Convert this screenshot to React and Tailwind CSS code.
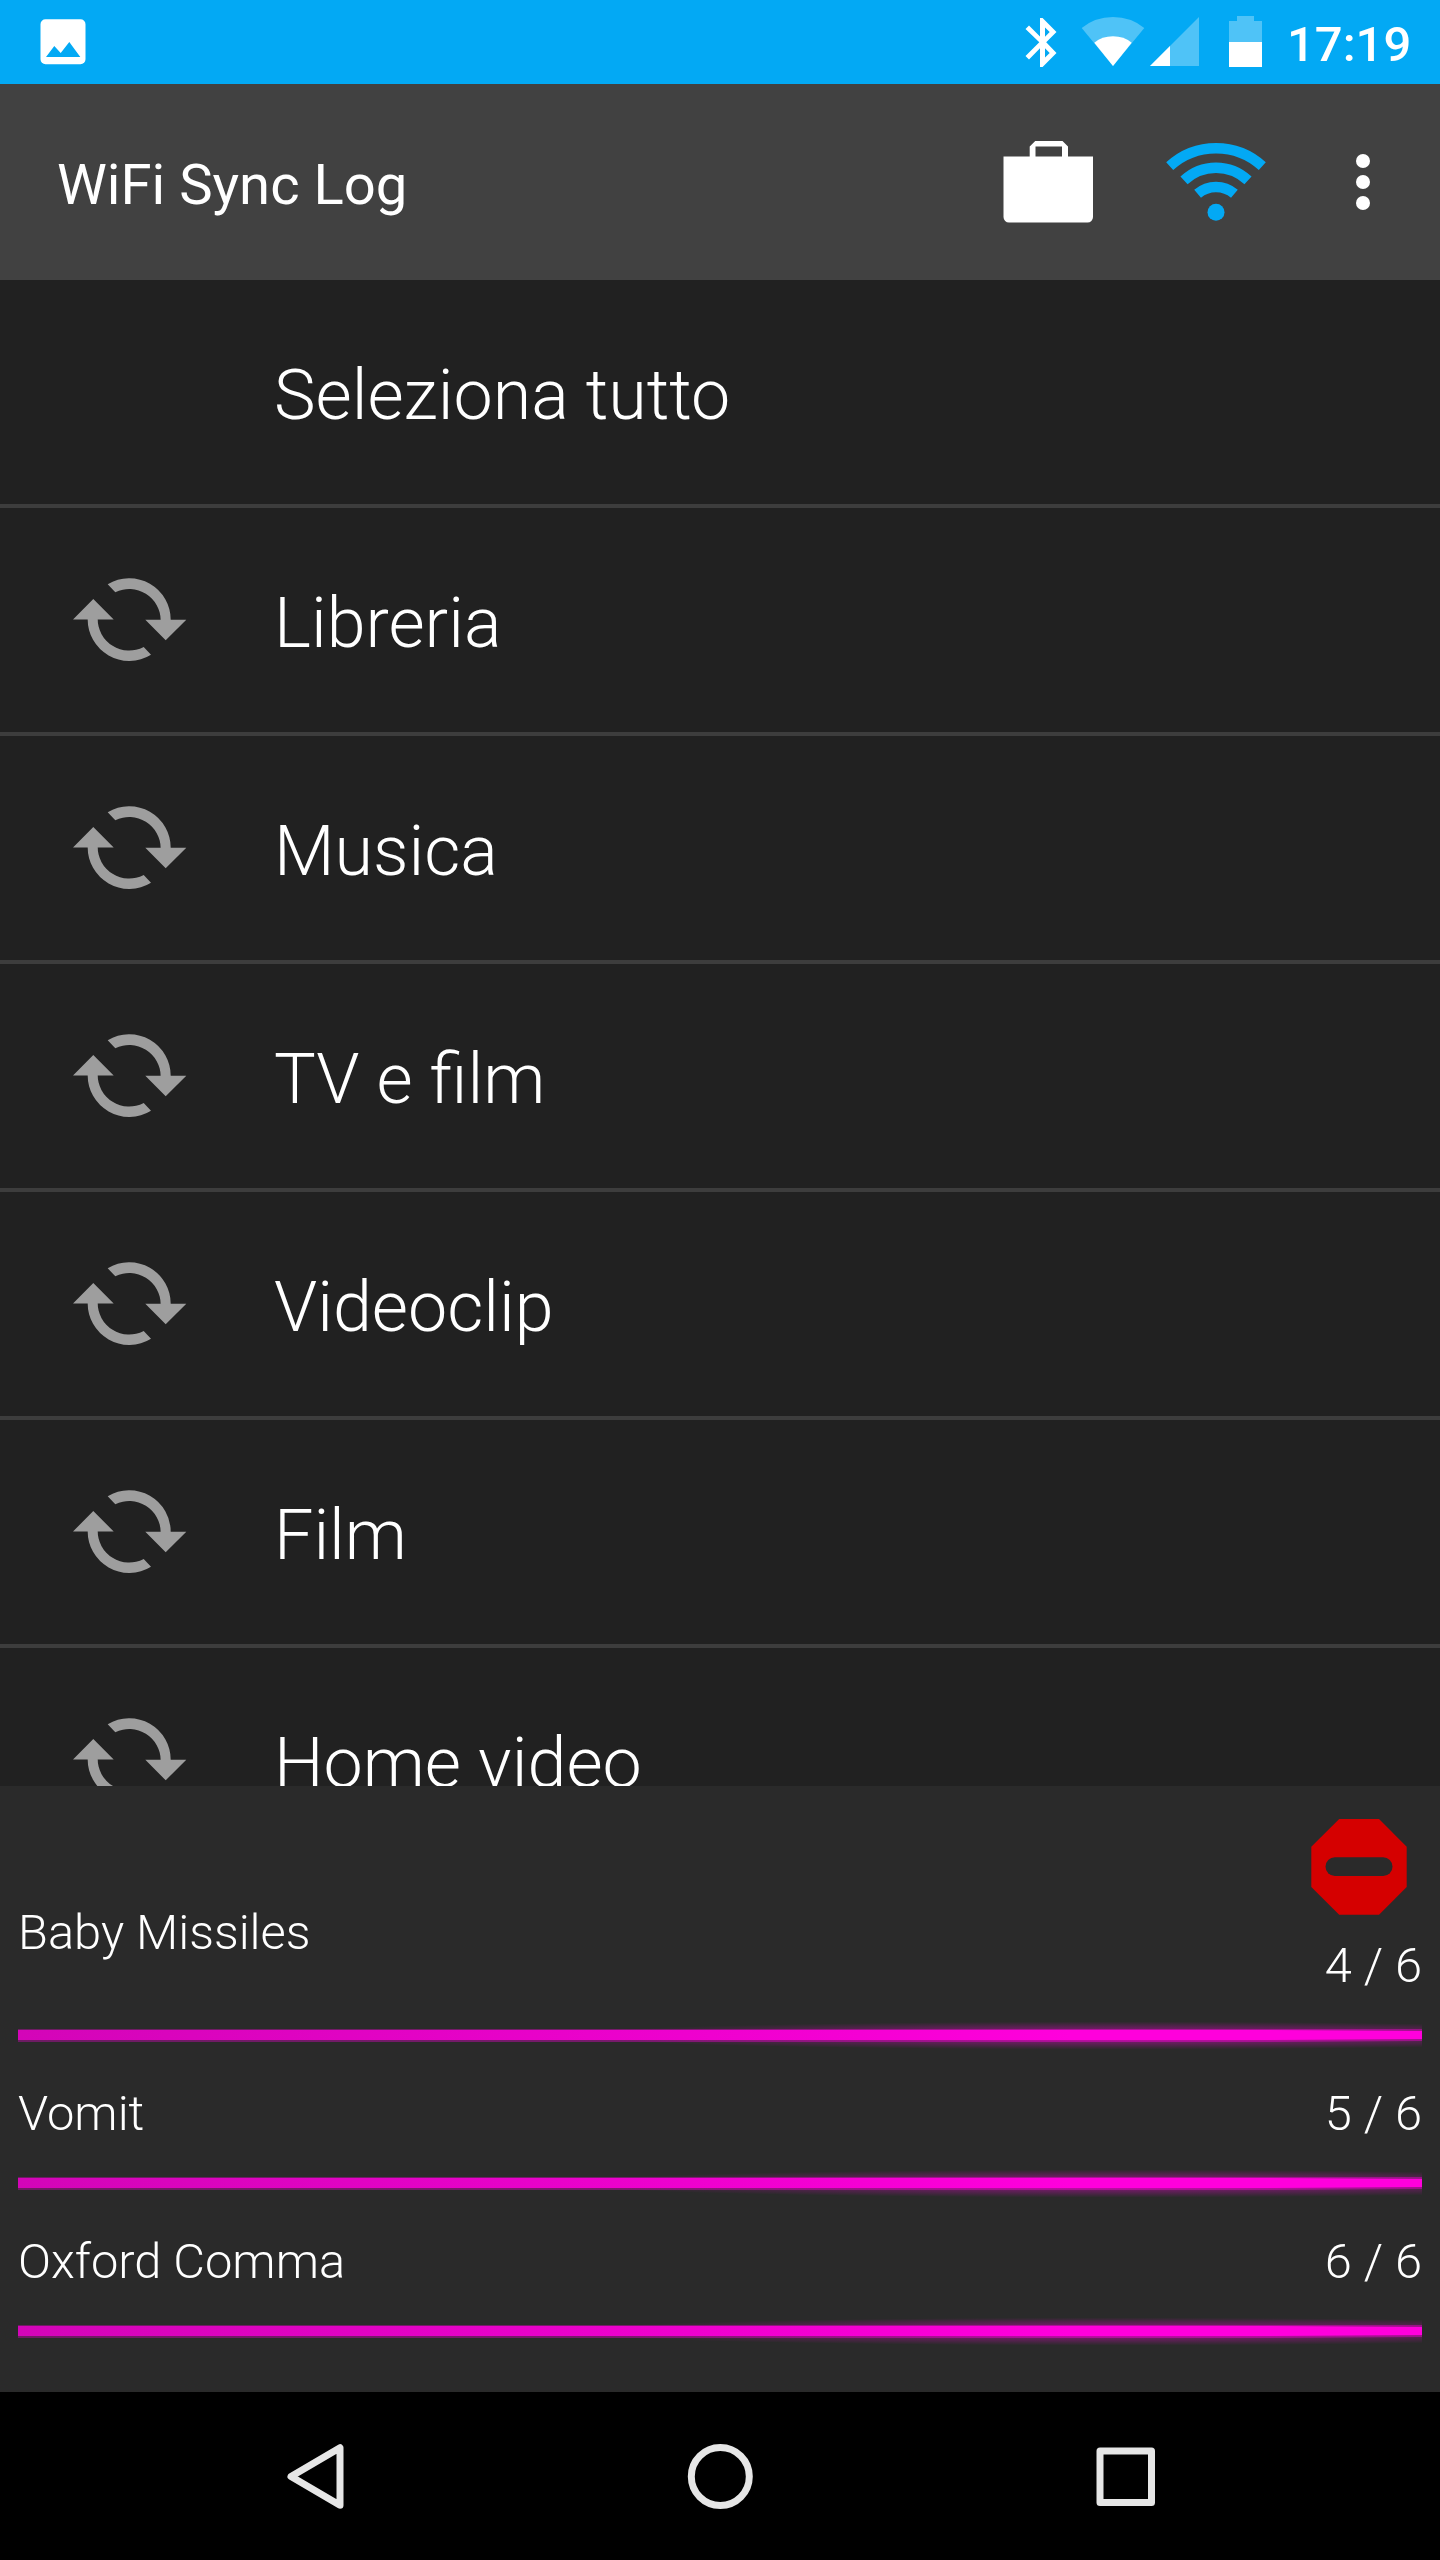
import { createElement } from 'react';

const items = ['Libreria', 'Musica', 'TV e film', 'Videoclip', 'Film', 'Home video'];

function SyncIcon() {
  return (
    <svg className="w-[114px] h-[84px]" viewBox="73 578 114 84" fill="#9e9e9e">
      <path d="M107.700 584.300 A41.500 41.500 0 0 1 170.700 620.500 H160.700 A31.500 31.500 0 0 0 115.300 592.300 Z" />
      <path d="M151 654.700 A41.500 41.500 0 0 1 87.700 618.500 H97.700 A31.500 31.500 0 0 0 143.700 647 Z" />
      <path d="M73 619.500 L93.300 599 L113.700 619.500 Z M145.300 619.700 H186.300 L165.700 640.300 Z" />
    </svg>
  );
}

function StatusBar() {
  return (
    <div className="h-[84px] bg-[#03a9f4] flex items-start">
      <svg className="w-[46px] h-[84px] ml-10" viewBox="40 0 46 84">
        <path
          fill="#fff"
          fillRule="evenodd"
          d="M45.500 19.300 H80.500 a5 5 0 0 1 5 5 V59.300 a5 5 0 0 1 -5 5 H45.500 a5 5 0 0 1 -5 -5 V24.300 a5 5 0 0 1 5 -5 Z M46 57 H80.300 L69.300 42 L60.700 53 L54.300 46 Z"
        />
      </svg>
      <svg className="w-[246px] h-[84px] ml-[934px]" viewBox="1020 0 246 84">
        <path
          fill="#fff"
          fillRule="evenodd"
          d="M1040 18 H1042.600 L1056.500 32 L1046.200 42.300 L1056.500 53 L1042.600 67 H1040 V48.200 L1029 59.500 L1025.500 56 L1039.300 42.300 L1025.500 29 L1029 25.500 L1040 36.500 Z M1045 27.500 V36.800 L1049.700 32 Z M1045 48.200 V57.500 L1049.700 53 Z"
        />
        <path fill="#4fc3f7" d="M1081.700 28 Q1095 17 1113 17 T1144.300 28 L1113 66 Z" />
        <path fill="#fff" d="M1094.300 42.700 Q1102 36.300 1113 36.300 T1131.700 42.700 L1113 66 Z" />
        <path fill="#4fc3f7" d="M1150 66 L1199 17 V66 Z" />
        <path fill="#fff" d="M1150 66 L1170 46 V66 Z" />
        <path fill="#4fc3f7" d="M1229 42 V21 H1237 V16 H1254 V21 H1262 V42 Z" />
        <path fill="#fff" d="M1229 42 H1262 V67 H1229 Z" />
      </svg>
      <span className="ml-[21px] mt-[15px] text-[49px] leading-[60px] font-medium">17:19</span>
    </div>
  );
}

function AppBar() {
  return (
    <div className="h-[196px] bg-[#414141] flex items-center">
      <h1 className="w-[946px] pl-[57px] pt-[5px] text-[56.200px] leading-[66px] font-normal">WiFi Sync Log</h1>
      <svg className="w-[494px] h-[196px]" viewBox="946 84 494 196">
        <path
          fill="#fff"
          fillRule="evenodd"
          d="M1003.500 156.500 H1029.700 V146.500 L1035.200 141 H1062.500 L1068 146.500 V156.500 H1093 V217 a5.500 5.500 0 0 1 -5.500 5.500 H1009 a5.500 5.500 0 0 1 -5.500 -5.500 Z M1035.500 146.500 V156.500 H1062 V146.500 Z"
        />
        <g fill="none" stroke="#03a9f4" strokeWidth="10.400">
          <path d="M1169.700 166.200 A68.800 68.800 0 0 1 1262.300 166.200" />
          <path d="M1184 180.400 A46.700 46.700 0 0 1 1248 180.400" />
          <path d="M1197.600 193.800 A28.300 28.300 0 0 1 1234.400 193.800" />
        </g>
        <circle cx="1216" cy="212.300" r="8.500" fill="#03a9f4" />
        <g fill="#fff">
          <circle cx="1363" cy="161" r="7" />
          <circle cx="1363" cy="182" r="7" />
          <circle cx="1363" cy="203" r="7" />
        </g>
      </svg>
    </div>
  );
}

function ListRow({ label, icon }) {
  return (
    <div className="h-[228px] shrink-0 border-b-4 border-[#3d3d3d] flex items-center">
      <div className="w-[274px] pl-[73px]">{icon && createElement(icon)}</div>
      <span className="pt-1.5 text-[70px] leading-[84px] font-light">{label}</span>
    </div>
  );
}

function ProgressBar() {
  return (
    <svg className="w-[1404px] h-[30px]" viewBox="0 0 1404 30">
      <defs>
        <linearGradient id="bar">
          <stop offset="0" stopColor="#d305b8" />
          <stop offset="0.6" stopColor="#f500d4" />
          <stop offset="0.75" stopColor="#ff00dc" />
          <stop offset="1" stopColor="#ff00dc" />
        </linearGradient>
        <radialGradient id="glow">
          <stop offset="0" stopColor="#ff00dc" stopOpacity="0.8" />
          <stop offset="0.5" stopColor="#ff00dc" stopOpacity="0.3" />
          <stop offset="1" stopColor="#ff00dc" stopOpacity="0" />
        </radialGradient>
      </defs>
      <ellipse cx="1100" cy="15.500" rx="560" ry="14" fill="url(#glow)" />
      <path d="M0 9 H1404 V21 L1250 22 H0 Z" fill="url(#bar)" opacity="0.4" />
      <path d="M0 10 H1250 L1404 11 V19 L1250 20 H0 Z" fill="url(#bar)" />
    </svg>
  );
}

function SyncPanel() {
  return (
    <div className="h-[606px] bg-[#2a2a2a] px-[18px] flex flex-col text-[48.800px] leading-[56px] font-light">
      <div className="h-[234px] flex justify-between">
        <span className="pt-[119px]">Baby Missiles</span>
        <div className="flex flex-col items-end">
          <svg className="w-24 h-24 mt-[33px] mr-[15px]" viewBox="0 0 96 96">
            <path fill="#d50000" d="M28.200 0 H68 L95.700 27.700 V68 L68 95.800 H28.200 L0.300 68 V27.700 Z" />
            <rect x="14.500" y="38.300" width="67" height="18.700" rx="9.300" fill="#2a2a2a" />
          </svg>
          <span className="mt-[23px]">4 / 6</span>
        </div>
      </div>
      <ProgressBar />
      <div className="h-[118px] pt-[36px] flex justify-between">
        <span>Vomit</span>
        <span>5 / 6</span>
      </div>
      <ProgressBar />
      <div className="h-[118px] pt-[36px] flex justify-between">
        <span>Oxford Comma</span>
        <span>6 / 6</span>
      </div>
      <ProgressBar />
    </div>
  );
}

function NavBar() {
  return (
    <div className="h-[168px] bg-black flex items-center justify-center">
      <svg className="w-[1440px] h-[168px]" viewBox="0 2392 1440 168">
        <g fill="none" stroke="#e6e6e6" strokeWidth="7" strokeLinejoin="round">
          <path d="M291 2476.500 L340 2447.700 V2505.300 Z" />
          <circle cx="720.300" cy="2476.500" r="29" />
          <rect x="1100" y="2451" width="51.500" height="51.500" />
        </g>
      </svg>
    </div>
  );
}

export default function App() {
  return (
    <div className="w-[1440px] h-[2560px] overflow-hidden bg-[#212121] text-white font-['Roboto',sans-serif]">
      <StatusBar />
      <AppBar />
      <div className="h-[1506px] flex flex-col overflow-hidden">
        <ListRow label="Seleziona tutto" />
        {items.map((label) => (
          <ListRow key={label} label={label} icon={SyncIcon} />
        ))}
      </div>
      <SyncPanel />
      <NavBar />
    </div>
  );
}
